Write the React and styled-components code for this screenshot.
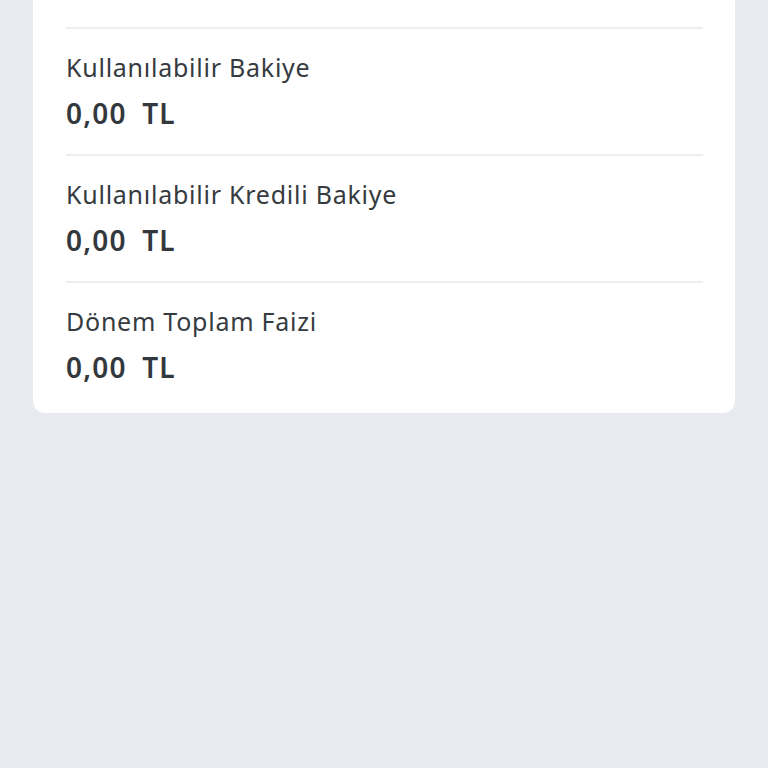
import styled, { createGlobalStyle } from "styled-components";

const GlobalStyle = createGlobalStyle`
  html, body {
    margin: 0;
    padding: 0;
    background: #e9eaef;
    font-family: "Noto Sans", "Open Sans", sans-serif;
  }
  body {
    height: 768px;
    overflow: hidden;
  }
`;

const Page = styled.div`
  padding: 0 33px;
`;

// card is scrolled so its first row sits mostly above the viewport
const Card = styled.div`
  margin-top: -109px;
  background: #ffffff;
  border-radius: 12px;
  padding: 8px 32px 5px 33px;
`;

const Row = styled.div`
  display: flex;
  flex-direction: column;
  gap: 12px;
  padding: 21px 0 ${(p) => (p.first ? "26px" : "23px")};
  border-top: ${(p) => (p.first ? "none" : "2px solid #eceef0")};
`;

const Label = styled.div`
  font-size: 25px;
  line-height: 34px;
  color: #363b40;
  letter-spacing: 0.75px;
`;

const Value = styled.div`
  font-size: 28px;
  line-height: 35px;
  font-weight: 600;
  color: #33383d;
  word-spacing: 7px;
  letter-spacing: 1.2px;
`;

const rows = [
  { label: "Kart Limiti", value: "1.000,00 TL" },
  { label: "Kullanılabilir Bakiye", value: "0,00 TL" },
  { label: "Kullanılabilir Kredili Bakiye", value: "0,00 TL" },
  { label: "Dönem Toplam Faizi", value: "0,00 TL" },
];

const App = () => {
  return (
    <Page>
      <GlobalStyle />
      <Card>
        {rows.map((r, i) => (
          <Row key={r.label} first={i === 0}>
            <Label>{r.label}</Label>
            <Value>{r.value}</Value>
          </Row>
        ))}
      </Card>
    </Page>
  );
};

export default App;
